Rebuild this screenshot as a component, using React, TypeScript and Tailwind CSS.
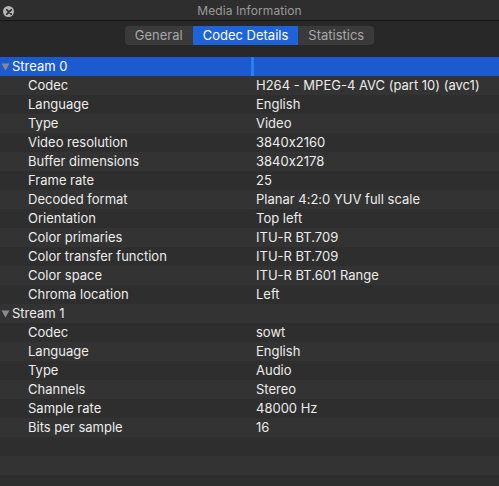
import { useState } from 'react'

type Row = { key: string; value: string }

const streams: { name: string; rows: Row[] }[] = [
  {
    name: 'Stream 0',
    rows: [
      { key: 'Codec', value: 'H264 - MPEG-4 AVC (part 10) (avc1)' },
      { key: 'Language', value: 'English' },
      { key: 'Type', value: 'Video' },
      { key: 'Video resolution', value: '3840x2160' },
      { key: 'Buffer dimensions', value: '3840x2178' },
      { key: 'Frame rate', value: '25' },
      { key: 'Decoded format', value: 'Planar 4:2:0 YUV full scale' },
      { key: 'Orientation', value: 'Top left' },
      { key: 'Color primaries', value: 'ITU-R BT.709' },
      { key: 'Color transfer function', value: 'ITU-R BT.709' },
      { key: 'Color space', value: 'ITU-R BT.601 Range' },
      { key: 'Chroma location', value: 'Left' },
    ],
  },
  {
    name: 'Stream 1',
    rows: [
      { key: 'Codec', value: 'sowt' },
      { key: 'Language', value: 'English' },
      { key: 'Type', value: 'Audio' },
      { key: 'Channels', value: 'Stereo' },
      { key: 'Sample rate', value: '48000 Hz' },
      { key: 'Bits per sample', value: '16' },
    ],
  },
]

const tabs = ['General', 'Codec Details', 'Statistics']

function Disclosure() {
  return (
    <svg width="9" height="8" viewBox="0 0 9 8" className="shrink-0">
      <path d="M0.5 0.5 H8.5 L4.5 7.5 Z" fill="#8a8a8a" />
    </svg>
  )
}

export default function App() {
  const [tab, setTab] = useState(1)

  // flatten the tree into rows so the stripes alternate across groups
  const lines: { kind: 'group' | 'item' | 'empty'; key?: string; value?: string; selected?: boolean }[] = []
  streams.forEach((s, i) => {
    lines.push({ kind: 'group', key: s.name, selected: i === 0 })
    s.rows.forEach((r) => lines.push({ kind: 'item', key: r.key, value: r.value }))
  })
  for (let i = 0; i < 3; i++) lines.push({ kind: 'empty' })

  return (
    <div
      className="w-[499px] h-[486px] overflow-hidden bg-[#2f2f2f] flex flex-col text-[13px] text-[#ececec] [font-feature-settings:'calt'_0]"
      style={{ fontFamily: 'Inter, "Liberation Sans", sans-serif' }}
    >
      {/* Title bar */}
      <div className="relative h-[21px] shrink-0 bg-[#2e2e2e] border-b border-[#141414] flex items-center justify-center">
        <div className="absolute left-[3px] top-[6px] w-[11px] h-[11px] rounded-full bg-[#b4b4b4] flex items-center justify-center">
          <svg width="6" height="6" viewBox="0 0 6 6">
            <path d="M0.5 0.5 L5.5 5.5 M5.5 0.5 L0.5 5.5" stroke="#2e2e2e" strokeWidth="1.6" strokeLinecap="round" />
          </svg>
        </div>
        <span className="text-[12px] text-[#9b9b9b] tracking-[0.1px] pt-[1px]">Media Information</span>
      </div>

      {/* Toolbar with segmented tabs */}
      <div className="h-[36px] shrink-0 bg-[#282828] flex justify-center pt-[5px]">
        <div className="flex h-[19px] rounded-[4px] bg-[#3a3a3a] overflow-hidden">
          {tabs.map((t, i) => (
            <button
              key={t}
              onClick={() => setTab(i)}
              className={
                i === tab
                  ? 'px-[10px] bg-[#1f63d9] text-white text-[13px] leading-[19px]'
                  : 'px-[10px] text-[#a8a8a8] text-[13px] leading-[19px]'
              }
            >
              {t}
            </button>
          ))}
        </div>
      </div>

      {/* Outline table */}
      <div className="flex-1 flex flex-col">
        {lines.map((l, i) => {
          const stripe = i % 2 === 0 ? 'bg-[#2e2e2e]' : 'bg-[#333333]'
          if (l.kind === 'group') {
            return (
              <div
                key={i}
                className={`h-[19px] flex items-center ${l.selected ? 'bg-[#1c5bcf] text-white' : stripe}`}
              >
                <div className="w-[251px] flex items-center gap-[2px] pl-[1px]">
                  <Disclosure />
                  <span>{l.key}</span>
                </div>
                {l.selected && <div className="w-[3px] h-[19px] bg-[#2a7ff0]" />}
              </div>
            )
          }
          return (
            <div key={i} className={`h-[19px] flex items-center ${stripe}`}>
              <div className="w-[256px] pl-[28px] shrink-0">{l.key}</div>
              <div>{l.value}</div>
            </div>
          )
        })}
        <div className="flex-1 bg-[#2e2e2e]" />
      </div>
      <div className="h-[3px] shrink-0 bg-[#1f2a3a] border-t border-[#4a6a90]" />
    </div>
  )
}
